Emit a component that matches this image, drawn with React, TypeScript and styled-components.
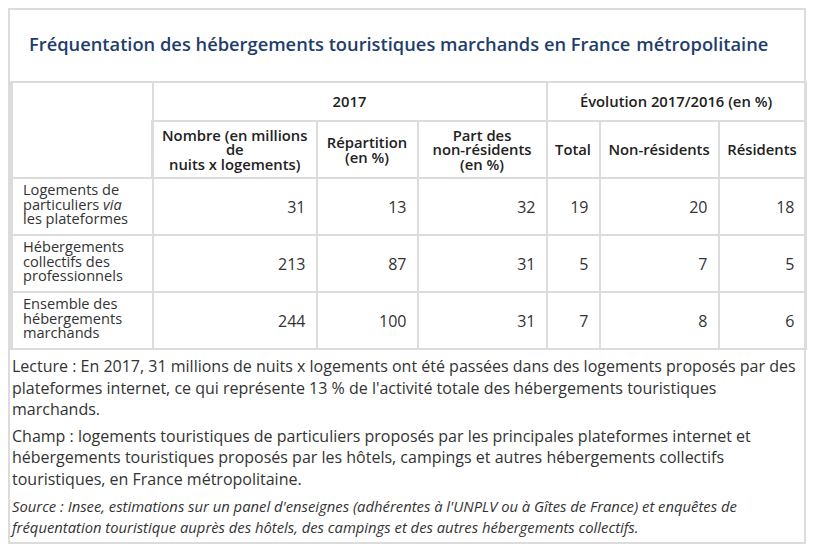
import styled, { createGlobalStyle } from 'styled-components';

const GlobalStyle = createGlobalStyle`
  body {
    margin: 8px;
    background: #ffffff;
    font-family: 'Open Sans', 'DejaVu Sans', sans-serif;
    color: #333;
  }
`;

const Frame = styled.div`
  width: 794px;
  border: 2px solid #dcdcdc;
  background: #fff;
`;

const Title = styled.h2`
  margin: 0;
  padding: 22px 0 25px 19px;
  font-size: 18.3px;
  line-height: 24px;
  font-weight: 600;
  color: #1f3e6c;
`;

const Spaced = styled.span`
  margin-left: 6px;
`;

const Table = styled.table`
  width: 794px;
  border-collapse: collapse;
  table-layout: fixed;
`;

const HeadCell = styled.th<{ $tall?: boolean }>`
  border: 2px solid #dcdcdc;
  font-size: 14.8px;
  font-weight: 600;
  line-height: 14.5px;
  text-align: center;
  padding: 0 2px;
  height: ${p => (p.$tall ? '55px' : '37px')};
  color: #222;
  white-space: nowrap;
  &:first-child {
    border-left-width: 3px;
  }
`;

const RowLabel = styled.td`
  border: 2px solid #dcdcdc;
  border-left-width: 3px;
  padding: 0 8px 5px 10px;
  height: 50px;
  font-size: 14.6px;
  line-height: 14.5px;
  color: #333;
  white-space: nowrap;
`;

const Num = styled.td`
  border: 2px solid #dcdcdc;
  text-align: right;
  padding: 0 10px;
  font-size: 16px;
  color: #333;
`;

const Notes = styled.div`
  padding: 6px 4px 3px 2px;
  color: #333;
`;

const Para = styled.p<{ $italic?: boolean }>`
  margin: 0 0 5px;
  font-style: ${p => (p.$italic ? 'italic' : 'normal')};
  font-size: ${p => (p.$italic ? '14.8px' : '16px')};
  line-height: 21.6px;
  white-space: nowrap;
  &:last-child {
    margin-bottom: 0;
  }
`;

const widths = [141, 164, 101, 129, 53, 119, 87];

const rows = [
  {
    label: (
      <>
        Logements de
        <br />
        particuliers <i>via</i>
        <br />
        les plateformes
      </>
    ),
    values: [31, 13, 32, 19, 20, 18],
  },
  {
    label: (
      <>
        Hébergements
        <br />
        collectifs des
        <br />
        professionnels
      </>
    ),
    values: [213, 87, 31, 5, 7, 5],
  },
  {
    label: (
      <>
        Ensemble des
        <br />
        hébergements
        <br />
        marchands
      </>
    ),
    values: [244, 100, 31, 7, 8, 6],
  },
];

export default function App() {
  return (
    <>
      <GlobalStyle />
      <Frame>
        <Title>
          Fréquentation des hébergements touristiques marchands en France<Spaced>métropolitaine</Spaced>
        </Title>
        <Table>
          <colgroup>
            {widths.map((w, i) => (
              <col key={i} style={{ width: w }} />
            ))}
          </colgroup>
          <thead>
            <tr>
              <HeadCell rowSpan={2} />
              <HeadCell colSpan={3}>2017</HeadCell>
              <HeadCell colSpan={3}>Évolution 2017/2016 (en %)</HeadCell>
            </tr>
            <tr>
              <HeadCell $tall>
                Nombre (en millions
                <br />
                de
                <br />
                nuits x logements)
              </HeadCell>
              <HeadCell $tall>
                Répartition
                <br />
                (en %)
              </HeadCell>
              <HeadCell $tall>
                Part des
                <br />
                non-résidents
                <br />
                (en %)
              </HeadCell>
              <HeadCell $tall>Total</HeadCell>
              <HeadCell $tall>Non-résidents</HeadCell>
              <HeadCell $tall>Résidents</HeadCell>
            </tr>
          </thead>
          <tbody>
            {rows.map((r, i) => (
              <tr key={i}>
                <RowLabel>{r.label}</RowLabel>
                {r.values.map((v, j) => (
                  <Num key={j}>{v}</Num>
                ))}
              </tr>
            ))}
          </tbody>
        </Table>
        <Notes>
          <Para>
            Lecture : En 2017, 31 millions de nuits x logements ont été passées dans des logements proposés par des
            <br />
            plateformes internet, ce qui représente 13 % de l'activité totale des hébergements touristiques
            <br />
            marchands.
          </Para>
          <Para>
            Champ : logements touristiques de particuliers proposés par les principales plateformes internet et
            <br />
            hébergements touristiques proposés par les hôtels, campings et autres hébergements collectifs
            <br />
            touristiques, en France métropolitaine.
          </Para>
          <Para $italic>
            Source : Insee, estimations sur un panel d'enseignes (adhérentes à l'UNPLV ou à Gîtes de France) et
            enquêtes de
            <br />
            fréquentation touristique auprès des hôtels, des campings et des autres hébergements collectifs.
          </Para>
        </Notes>
      </Frame>
    </>
  );
}
